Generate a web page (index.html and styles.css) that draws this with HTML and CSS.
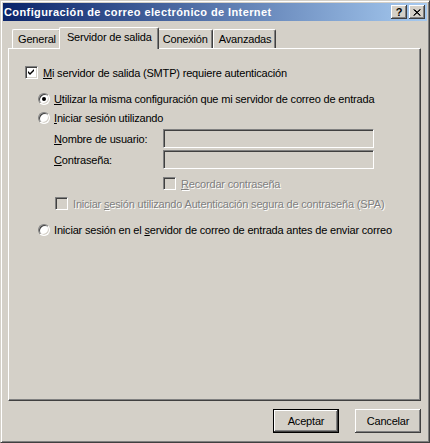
FILE: index.html
```html
<!DOCTYPE html>
<html lang="es">
    <head>
        <meta charset="UTF-8">
        <title>Configuración de correo electrónico de Internet</title>
        <link rel="stylesheet" href="styles.css">
    </head>
    <body>
        <div class="window">

            <div class="titlebar">
                <span class="title">Configuración de correo electrónico de Internet</span>
                <span class="caption-buttons">
                    <span class="caption-btn help">?</span>
                    <span class="caption-btn">
                        <svg width="8" height="7" viewBox="0 0 8 7">
                            <path d="M0.5 0.5 L7 6.5 M1.5 0.5 L7.5 6.5 M7 0.5 L0.5 6.5 M7.5 0.5 L1 6.5" stroke="#000" stroke-width="1"/>
                        </svg>
                    </span>
                </span>
            </div>

            <div class="content">
                <div class="tabs">
                    <div class="tab">General</div>
                    <div class="tab selected">Servidor de salida</div>
                    <div class="tab">Conexión</div>
                    <div class="tab">Avanzadas</div>
                </div>

                <div class="panel">
                    <div class="check-row">
                        <span class="checkbox">
                            <svg width="7" height="7" viewBox="0 0 7 7">
                                <path d="M0 2 L2 4 L6 0 L6 2 L2 6 L0 4 Z" fill="#000"/>
                            </svg>
                        </span>
                        <span><u>M</u>i servidor de salida (SMTP) requiere autenticación</span>
                    </div>

                    <div class="radio-row first-radio">
                        <span class="radio checked"></span>
                        <span><u>U</u>tilizar la misma configuración que mi servidor de correo de entrada</span>
                    </div>

                    <div class="radio-row second-radio">
                        <span class="radio"></span>
                        <span><u>I</u>niciar sesión utilizando</span>
                    </div>

                    <div class="fields">
                        <div class="field">
                            <span class="field-label"><u>N</u>ombre de usuario:</span>
                            <span class="textbox"></span>
                        </div>
                        <div class="field">
                            <span class="field-label"><u>C</u>ontraseña:</span>
                            <span class="textbox"></span>
                        </div>
                    </div>

                    <div class="check-row disabled remember">
                        <span class="checkbox"></span>
                        <span><u>R</u>ecordar contraseña</span>
                    </div>

                    <div class="check-row disabled spa">
                        <span class="checkbox"></span>
                        <span>Iniciar <u>s</u>esión utilizando Autenticación segura de contraseña (SPA)</span>
                    </div>

                    <div class="radio-row last-radio">
                        <span class="radio"></span>
                        <span>Iniciar sesión en el <u>s</u>ervidor de correo de entrada antes de enviar correo</span>
                    </div>
                </div>

                <div class="buttons">
                    <button class="btn default">Aceptar</button>
                    <button class="btn">Cancelar</button>
                </div>
            </div>

        </div>
    </body>
</html>
```

FILE: styles.css
```css
body {
    margin: 0;
    background: #d4d0c8;
    font-family: "Liberation Sans", Arial, sans-serif;
    font-size: 11px;
    letter-spacing: -0.18px;
    color: #000;
}
u {
    text-decoration-thickness: 1px;
    text-underline-offset: 1px;
}
.window {
    width: 430px;
    height: 443px;
    box-sizing: border-box;
    padding: 2px;
    border: 1px solid;
    border-color: #d4d0c8 #404040 #404040 #d4d0c8;
    box-shadow: inset 1px 1px #fff, inset -1px -1px #808080;
    background: #d4d0c8;
}
.titlebar {
    height: 18px;
    display: flex;
    align-items: center;
    justify-content: space-between;
    padding: 0 2px 0 1px;
    background: linear-gradient(to right, #0a246a, #a6caf0);
    color: #fff;
    font-weight: bold;
}
.title {
    letter-spacing: 0.4px;
}
.caption-buttons {
    display: flex;
    gap: 2px;
}
.caption-btn {
    width: 16px;
    height: 14px;
    box-sizing: border-box;
    display: flex;
    align-items: center;
    justify-content: center;
    background: #d4d0c8;
    box-shadow: inset -1px -1px #404040, inset 1px 1px #fff, inset -2px -2px #808080;
    color: #000;
}
.caption-btn.help {
    font-size: 11px;
    padding-bottom: 1px;
}
.content {
    padding: 6px 6px 0 5px;
}
.tabs {
    display: flex;
    align-items: flex-end;
    height: 21px;
    padding-left: 4px;
}
.tab {
    height: 19px;
    box-sizing: border-box;
    padding: 0 4px 1px 5px;
    display: flex;
    align-items: center;
    border-top: 1px solid #fff;
    border-left: 1px solid #fff;
    border-right: 1px solid #404040;
    border-radius: 2px 2px 0 0;
    box-shadow: inset -1px 0 #808080;
    background: #d4d0c8;
}
.tab.selected {
    height: 22px;
    margin: 0 -2px -1px;
    padding: 0 6px 3px 7px;
    position: relative;
    z-index: 1;
}
.panel {
    height: 353px;
    box-sizing: border-box;
    padding: 17px 0 0 16px;
    border: 1px solid;
    border-color: #fff #404040 #404040 #fff;
    box-shadow: inset -1px -1px #808080;
}
.check-row {
    display: flex;
    align-items: center;
    gap: 5px;
    height: 13px;
}
.radio-row {
    display: flex;
    align-items: center;
    gap: 4px;
    height: 13px;
    padding-left: 13px;
}
.checkbox {
    width: 13px;
    height: 13px;
    box-sizing: border-box;
    display: flex;
    align-items: center;
    justify-content: center;
    border: 1px solid;
    border-color: #808080 #fff #fff #808080;
    box-shadow: inset 1px 1px #404040, inset -1px -1px #d4d0c8;
    background: #fff;
}
.radio {
    width: 12px;
    height: 12px;
    box-sizing: border-box;
    display: flex;
    align-items: center;
    justify-content: center;
    border-radius: 50%;
    border: 1px solid;
    border-color: #808080 #fff #fff #808080;
    box-shadow: inset 1px 1px #404040, inset -1px -1px #d4d0c8;
    background: #fff;
}
.radio.checked::after {
    content: "";
    width: 4px;
    height: 4px;
    border-radius: 50%;
    background: #000;
}
.first-radio {
    margin-top: 13px;
}
.second-radio {
    margin-top: 6px;
}
.fields {
    margin-top: 5px;
    padding-left: 29px;
    display: flex;
    flex-direction: column;
    gap: 2px;
}
.field {
    display: flex;
    align-items: center;
}
.field-label {
    width: 109px;
}
.textbox {
    width: 211px;
    height: 19px;
    box-sizing: border-box;
    border: 1px solid;
    border-color: #808080 #fff #fff #808080;
    box-shadow: inset 1px 1px #404040, inset -1px -1px #d4d0c8;
    background: #d4d0c8;
}
.disabled {
    color: #808080;
    text-shadow: 1px 1px #fff;
}
.disabled .checkbox {
    background: #d4d0c8;
}
.remember {
    margin-top: 8px;
    padding-left: 138px;
}
.spa {
    margin-top: 7px;
    padding-left: 30px;
}
.last-radio {
    margin-top: 13px;
}
.buttons {
    display: flex;
    justify-content: flex-end;
    gap: 16px;
    margin-top: 8px;
}
.btn {
    width: 66px;
    height: 24px;
    padding: 0;
    font-family: inherit;
    font-size: 11px;
    letter-spacing: inherit;
    color: #000;
    background: #d4d0c8;
    border: none;
    box-shadow: inset -1px -1px #404040, inset 1px 1px #fff, inset -2px -2px #808080;
}
.btn.default {
    border: 1px solid #000;
}
```
